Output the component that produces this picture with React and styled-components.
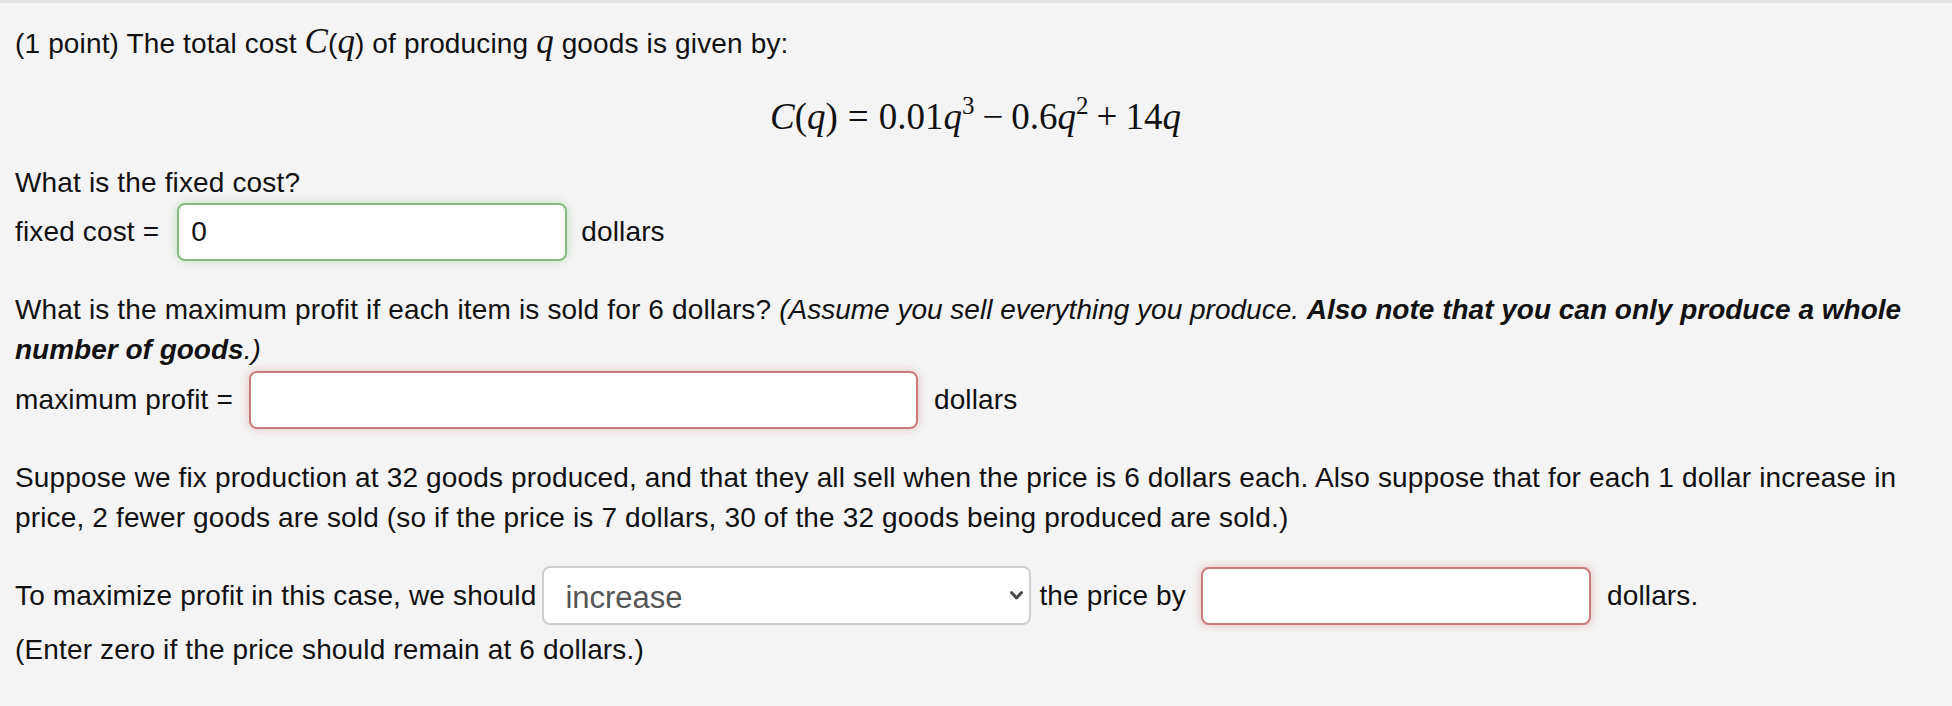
import React from 'react';
import styled, { createGlobalStyle } from 'styled-components';

const GlobalStyle = createGlobalStyle`
  body {
    margin: 0;
    background: #f4f4f4;
  }
`;

const Page = styled.div`
  box-sizing: border-box;
  min-height: 100vh;
  background: #f4f4f4;
  border-top: 3px solid #e4e4e4;
  padding: 21px 16px 0 15px;
  font-family: "Liberation Sans", Arial, Helvetica, sans-serif;
  font-size: 28px;
  line-height: 40px;
  letter-spacing: 0.15px;
  color: #111;
`;

const Text = styled.div`
  margin-top: ${({ $top }) => $top || 0}px;
`;

const Aside = styled.i`
  letter-spacing: 0;
`;

const Var = styled.span`
  font-family: "Liberation Serif", "Times New Roman", serif;
  font-style: italic;
  font-size: 35px;
  line-height: 1;
  letter-spacing: 0;
`;

const MathBlock = styled.div`
  margin-top: 33px;
  text-align: center;
  font-family: "Liberation Serif", "Times New Roman", serif;
  font-size: 37px;
  line-height: 40px;
  letter-spacing: 0;

  i {
    font-style: italic;
  }

  sup {
    font-size: 25px;
    line-height: 0;
    position: relative;
    top: -2px;
  }
`;

const Op = styled.span`
  margin: 0 ${({ $space }) => $space || 8}px;
`;

const AnswerRow = styled.div`
  display: flex;
  align-items: center;
  margin-top: ${({ $top }) => $top || 0}px;
  white-space: pre;
`;

const AnswerBox = styled.input`
  box-sizing: border-box;
  width: ${({ $width }) => $width}px;
  height: 58px;
  margin: 0 ${({ $after }) => $after || 16}px 0 ${({ $before }) => $before || 16}px;
  padding: 0 12px;
  background: #fff;
  border: 2px solid ${({ $status }) => ($status === 'correct' ? '#86b983' : '#c97c7b')};
  border-radius: 8px;
  box-shadow: 0 0 10px ${({ $status }) => ($status === 'correct' ? 'rgba(100, 170, 95, 0.35)' : 'rgba(205, 95, 95, 0.35)')};
  font-family: "Liberation Sans", Arial, sans-serif;
  font-size: 28px;
  color: #111;
  outline: none;
`;

const ChoiceWrap = styled.div`
  position: relative;
  margin: 0 8px 0 6px;
`;

const Choice = styled.select`
  box-sizing: border-box;
  width: 489px;
  height: 59px;
  padding: 4px 40px 0 21px;
  appearance: none;
  background: #fff;
  border: 2px solid #cfcfcf;
  border-radius: 8px;
  font-family: "Liberation Sans", Arial, sans-serif;
  font-size: 31px;
  color: #555;
  outline: none;
`;

const Chevron = styled.svg`
  position: absolute;
  right: 7px;
  top: 23px;
  width: 15px;
  height: 13px;
  pointer-events: none;
`;

export default function App() {
  return (
    <>
      <GlobalStyle />
      <Page>
        <Text>
          (1 point) The total cost <Var>C</Var>(<Var>q</Var>) of producing <Var>q</Var> goods is given by:
        </Text>

        <MathBlock>
          <i>C</i>(<i>q</i>)<Op $space={10}>=</Op>0.01<i>q</i>
          <sup>3</sup>
          <Op>−</Op>0.6<i>q</i>
          <sup>2</sup>
          <Op>+</Op>14<i>q</i>
        </MathBlock>

        <Text $top={26}>What is the fixed cost?</Text>
        <AnswerRow>
          fixed cost =
          <AnswerBox $width={390} $status="correct" defaultValue="0" $before={18} $after={14} />
          dollars
        </AnswerRow>

        <Text $top={29}>
          What is the maximum profit if each item is sold for 6 dollars?{' '}
          <Aside>
            (Assume you sell everything you produce. <b>Also note that you can only produce a whole number of goods</b>.)
          </Aside>
        </Text>
        <AnswerRow $top={1}>
          maximum profit =
          <AnswerBox $width={669} $status="incorrect" defaultValue="" $before={16} $after={16} />
          dollars
        </AnswerRow>

        <Text $top={29}>
          Suppose we fix production at 32 goods produced, and that they all sell when the price is 6 dollars each. Also
          suppose that for each 1 dollar increase in price, 2 fewer goods are sold (so if the price is 7 dollars, 30 of
          the 32 goods being produced are sold.)
        </Text>

        <AnswerRow $top={28}>
          To maximize profit in this case, we should
          <ChoiceWrap>
            <Choice defaultValue="increase">
              <option value="?">?</option>
              <option value="increase">increase</option>
              <option value="decrease">decrease</option>
            </Choice>
            <Chevron viewBox="0 0 15 13">
              <path d="M2.5 3.5 L7.5 9 L12.5 3.5" fill="none" stroke="#4a4a4a" strokeWidth="3" strokeLinecap="round" strokeLinejoin="round" />
            </Chevron>
          </ChoiceWrap>
          the price by
          <AnswerBox $width={390} $status="incorrect" defaultValue="" $before={15} $after={16} />
          dollars.
        </AnswerRow>

        <Text $top={5}>(Enter zero if the price should remain at 6 dollars.)</Text>
      </Page>
    </>
  );
}
